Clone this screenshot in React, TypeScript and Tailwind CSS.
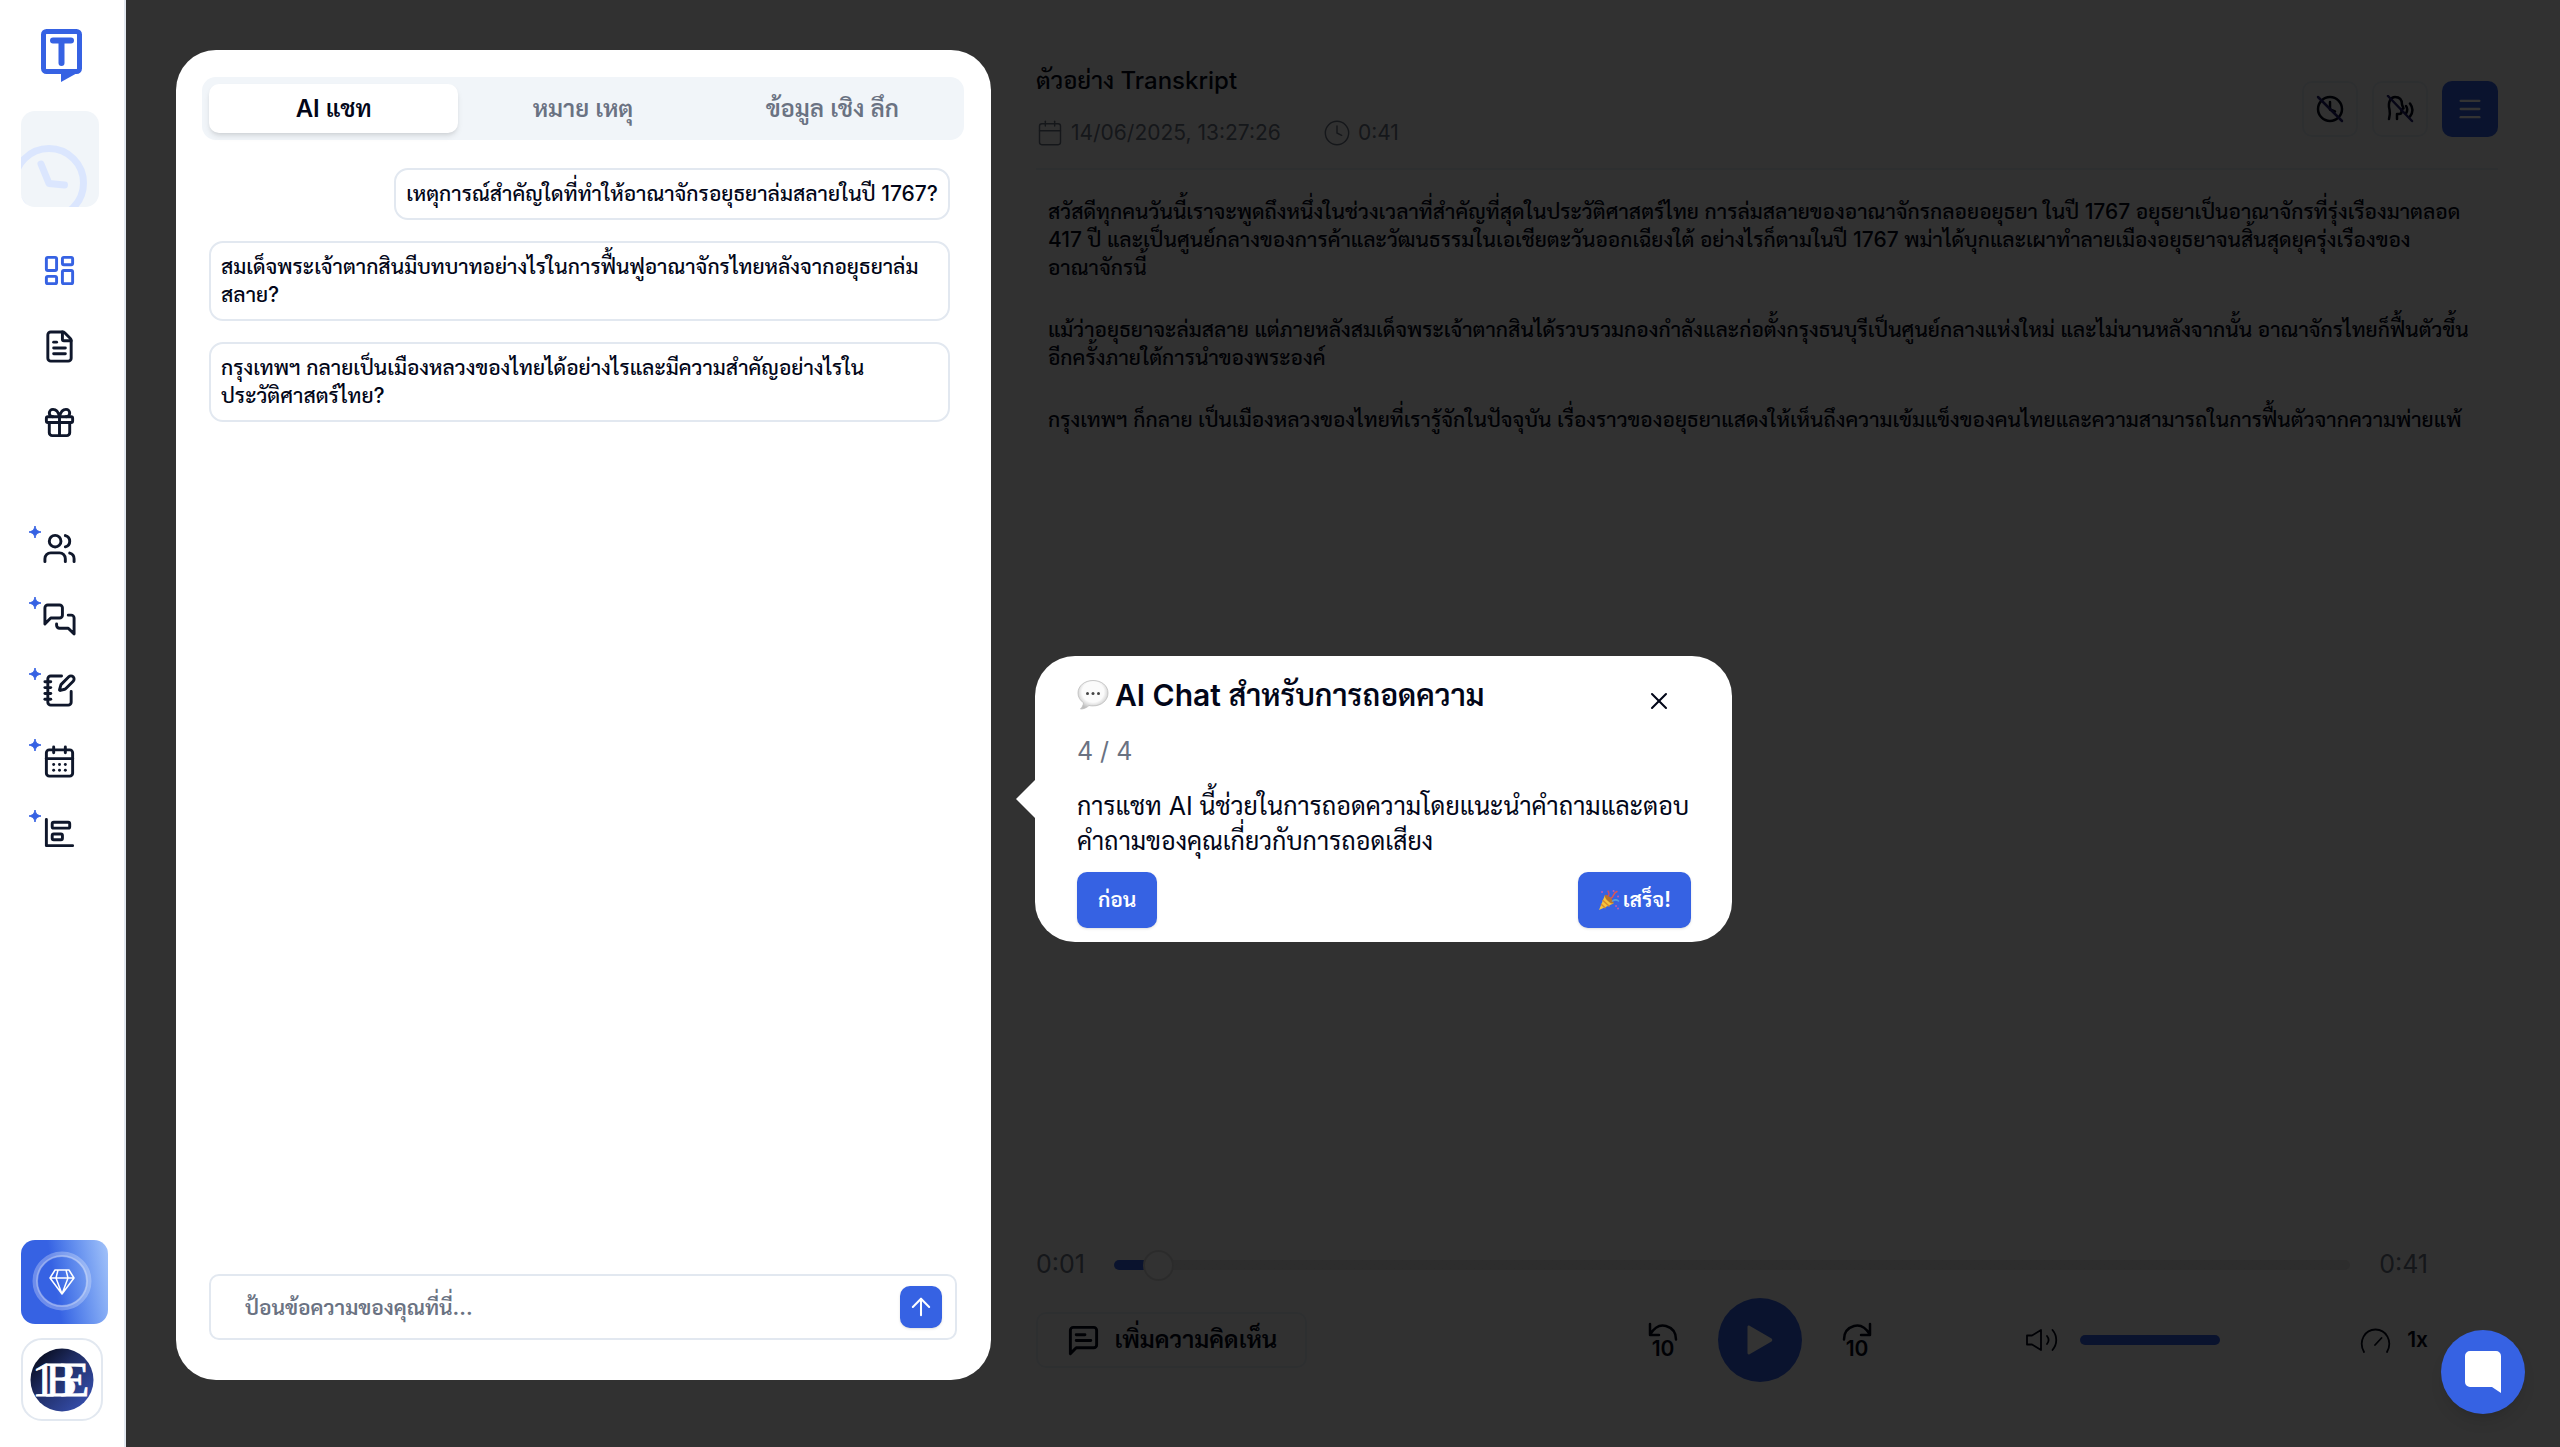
import type { ReactNode } from "react";
import { ArrowUp, Calendar, CalendarDays, Clock, FileText, Gift, LayoutDashboard, Menu, NotebookPen, X } from "lucide-react";

const BLUE = "#3662e3";

function Stroke({ size = 35, width = 2, children }: { size?: number; width?: number; children: ReactNode }) {
  return (
    <svg width={size} height={size} viewBox="0 0 24 24" fill="none" stroke="currentColor" strokeWidth={width} strokeLinecap="round" strokeLinejoin="round" aria-hidden="true">
      {children}
    </svg>
  );
}

function Logo() {
  return (
    <svg width="41" height="53" viewBox="0 0 41 53" aria-hidden="true">
      <rect x="2.5" y="2.5" width="36" height="40" rx="3" fill="none" stroke={BLUE} strokeWidth="5" />
      <path d="M20 43h18l-18 10z" fill={BLUE} />
      <path d="M12 11.5h18M20.5 12v22" stroke={BLUE} strokeWidth="6" strokeLinecap="round" fill="none" />
    </svg>
  );
}

function Sparkle() {
  return (
    <svg className="absolute -top-[5px] left-[29px]" width="12" height="12" viewBox="0 0 12 12" aria-hidden="true">
      <path d="M6 0c.7 3.5 1.8 4.900 6 6-4.200 1.100-5.300 2.500-6 6-.7-3.500-1.800-4.900-6-6 4.200-1.100 5.300-2.500 6-6z" fill={BLUE} stroke={BLUE} strokeWidth="1" strokeLinejoin="round" />
    </svg>
  );
}

function Sidebar() {
  const tools: [string, ReactNode][] = [
    ["ทีม", <Stroke><path d="M16 21v-2a4 4 0 0 0-4-4H6a4 4 0 0 0-4 4v2" /><circle cx="9" cy="7" r="4" /><path d="M22 21v-2a4 4 0 0 0-3-3.870M16 3.130a4 4 0 0 1 0 7.750" /></Stroke>],
    ["แชท", <Stroke><path d="M14 9a2 2 0 0 1-2 2H6l-4 4V4a2 2 0 0 1 2-2h8a2 2 0 0 1 2 2zM18 9h2a2 2 0 0 1 2 2v11l-4-4h-6a2 2 0 0 1-2-2v-1" /></Stroke>],
    ["สมุดบันทึก", <NotebookPen size={35} />],
    ["ปฏิทิน", <CalendarDays size={35} />],
    ["รายงาน", <Stroke><path d="M3 3v18h18" /><rect x="7" y="5" width="12" height="4" rx="1" /><rect x="7" y="13" width="7" height="4" rx="1" /></Stroke>],
  ];
  return (
    <aside className="relative z-20 flex w-[126px] shrink-0 flex-col border-r-2 border-slate-200 bg-white text-slate-900">
      <a href="#home" aria-label="Transkript" className="ml-[41px] mt-[29px]"><Logo /></a>
      <button aria-label="ประวัติ" className="ml-[21px] mt-[29px] h-24 w-[78px] overflow-hidden rounded-[14px] bg-slate-100">
        <svg width="78" height="96" viewBox="0 0 78 96" fill="none" stroke="#dbe6fe" strokeLinecap="round" strokeLinejoin="round" aria-hidden="true">
          <circle cx="28" cy="72" r="34.500" strokeWidth="7" />
          <path d="M20 53l8 19.500 15.500 1.500" strokeWidth="7" />
        </svg>
      </button>
      <nav className="mt-[46px] flex flex-col gap-[41px]">
        <a href="#dashboard" aria-label="แดชบอร์ด" className="ml-[42px] w-[35px]" style={{ color: BLUE }}><LayoutDashboard size={35} /></a>
        <a href="#files" aria-label="ไฟล์" className="ml-[42px] w-[35px]"><FileText size={35} /></a>
        <a href="#gifts" aria-label="ของขวัญ" className="ml-[42px] w-[35px]"><Gift size={35} /></a>
      </nav>
      <nav className="mt-[91px] flex flex-col gap-9">
        {tools.map(([label, icon]) => (
          <a key={label} href="#tools" aria-label={label} className="relative pl-[42px]"><Sparkle />{icon}</a>
        ))}
      </nav>
      <div className="mb-[26px] ml-[21px] mt-auto flex flex-col gap-[14px]">
        <button aria-label="อัปเกรด" className="flex h-[84px] w-[87px] items-center justify-center rounded-[14px] bg-linear-80 from-[#3662e3] from-40% to-[#a3c3f9]">
          <svg className="mr-[5px] mt-[-3px]" width="60" height="60" viewBox="0 0 60 60" fill="none" stroke="#fff" aria-hidden="true">
            <circle cx="30" cy="30" r="27" strokeOpacity=".28" strokeWidth="5" />
            <circle cx="30" cy="30" r="25" strokeOpacity=".28" strokeWidth="2" />
            <path d="M23 19h14l5 8-12 16-12-16zM18 27h24M26 19l-2 8 6 16 6-16-2-8" strokeWidth="1.500" strokeLinejoin="round" />
          </svg>
        </button>
        <button aria-label="1BE" className="flex h-[83px] w-[82px] items-center justify-center rounded-[21px] border-2 border-slate-200 bg-white">
          <svg width="64" height="64" viewBox="0 0 64 64" aria-hidden="true">
            <defs>
              <linearGradient id="avatar" x1="0" y1="0" x2="1" y2="1">
                <stop offset="0.050" stopColor="#040714" /><stop offset="0.400" stopColor="#1e2b60" /><stop offset="1" stopColor="#3b56bd" />
              </linearGradient>
            </defs>
            <circle cx="32" cy="32" r="31.500" fill="url(#avatar)" />
            <text x="2 15 30" y="48" fill="#fff" stroke="#fff" strokeWidth=".8" fontFamily="Liberation Serif, serif" fontSize="48">1BE</text>
          </svg>
        </button>
      </div>
    </aside>
  );
}

const bubble = "rounded-[14px] border-2 border-slate-200 px-[10px] py-[10px] text-left text-[21px] font-medium leading-[28px] text-slate-950";

function ChatPanel() {
  return (
    <section className="relative z-20 mb-0.5 flex flex-col rounded-[40px] bg-white pb-10 pl-[26px] pr-[27px] pt-[27px]">
      <div role="tablist" className="grid h-[63px] grid-cols-3 rounded-[14px] bg-slate-100 p-[7px] text-2xl font-semibold text-gray-500">
        <button role="tab" aria-selected="true" className="rounded-[10px] bg-white text-slate-950 shadow-md">AI แชท</button>
        <button role="tab" aria-selected="false">หมาย เหตุ</button>
        <button role="tab" aria-selected="false">ข้อมูล เชิง ลึก</button>
      </div>
      <div className="mt-7 flex flex-1 flex-col items-end gap-[21px] pl-[7px] pr-[14px]">
        <button className={bubble}>เหตุการณ์สำคัญใดที่ทำให้อาณาจักรอยุธยาล่มสลายในปี 1767?</button>
        <button className={`${bubble} w-full`}>สมเด็จพระเจ้าตากสินมีบทบาทอย่างไรในการฟื้นฟูอาณาจักรไทยหลังจากอยุธยาล่ม<br />สลาย?</button>
        <button className={`${bubble} w-full`}>กรุงเทพฯ กลายเป็นเมืองหลวงของไทยได้อย่างไรและมีความสำคัญอย่างไรใน<br />ประวัติศาสตร์ไทย?</button>
      </div>
      <form className="ml-[7px] mr-[7px] flex h-[66px] items-center rounded-[10px] border-2 border-slate-200 pl-[34px] pr-[13px]">
        <input aria-label="ข้อความ" placeholder="ป้อนข้อความของคุณที่นี่..." className="h-full min-w-0 flex-1 text-[21px] font-semibold leading-[42px] outline-none placeholder:overflow-visible placeholder:leading-[42px] placeholder:text-gray-500" />
        <button type="button" aria-label="ส่ง" className="flex size-[42px] items-center justify-center rounded-[10px] bg-[#3662e3] text-white shadow"><ArrowUp size={28} strokeWidth={1.75} /></button>
      </form>
      <Tour />
    </section>
  );
}

function SpeechBalloon() {
  return (
    <svg width="32" height="32" viewBox="0 0 32 32" aria-hidden="true">
      <defs><radialGradient id="balloon" cx=".5" cy=".4" r=".6"><stop offset="0.600" stopColor="#fbfbfb" /><stop offset="1" stopColor="#bdbdbd" /></radialGradient></defs>
      <path d="M16 1.500C7.500 1.500 1 7 1 14c0 4 2 7.500 5.500 9.700C6.500 26 5 28.500 3.500 30c3 .2 6.500-1.500 8.500-3.500 1.300.3 2.600.4 4 .4 8.500 0 15-5.600 15-12.900S24.500 1.500 16 1.500z" fill="url(#balloon)" stroke="#bdbdbd" strokeWidth=".8" />
      <circle cx="10.500" cy="14.500" r="1.500" fill="#444" /><circle cx="16" cy="14.500" r="1.500" fill="#444" /><circle cx="21.500" cy="14.500" r="1.500" fill="#444" />
    </svg>
  );
}

function PartyPopper() {
  return (
    <svg width="22" height="22" viewBox="0 0 22 22" fill="none" strokeLinecap="round" aria-hidden="true">
      <path d="M1 21L7 6c3 1 7.500 5 8.500 8.500z" fill="#f5c33b" />
      <path d="M5 11.500l6 5.500M3.500 15.500l3.500 3.200" stroke="#d98a2b" strokeWidth="1.500" />
      <ellipse cx="11.200" cy="10.200" rx="2.200" ry="5.800" transform="rotate(-45 11.200 10.200)" fill="#b9742a" />
      <path d="M10 7c1.500-1 1-3.500 0-5" stroke="#c9506a" strokeWidth="1.500" />
      <path d="M13 9c3 0 1.500-5 6-6.500" stroke="#e0564f" strokeWidth="1.500" />
      <path d="M14.500 12c2-1.500 4-1.500 6 0" stroke="#57a0dc" strokeWidth="1.500" />
      <path d="M4 3h.1M15.500 2h.1M20 7.500h.1M18 17h.1M20 19.500h.1" stroke="#c35bb0" strokeWidth="1.800" />
    </svg>
  );
}

function Tour() {
  return (
    <div role="dialog" aria-label="AI Chat" className="absolute left-full top-[606px] ml-11 w-[697px] rounded-[40px] bg-white pb-[14px] pl-[42px] pr-[41px] pt-[17px] text-slate-950">
      <svg className="absolute -left-[19px] top-[123px]" width="20" height="40" viewBox="0 0 20 40" aria-hidden="true"><path d="M20 0L0 20l20 20z" fill="#fff" /></svg>
      <div className="flex items-start justify-between">
        <div>
          <h2 className="flex items-center gap-[6px] whitespace-nowrap text-[30px] font-semibold leading-[44px]"><SpeechBalloon />AI Chat สำหรับการถอดความ</h2>
          <p className="mt-[17px] text-[25px] leading-[35px] text-gray-500">4 / 4</p>
        </div>
        <button aria-label="ปิด" className="mr-1 flex size-14 items-center justify-center"><X size={28} strokeWidth={1.75} /></button>
      </div>
      <p className="mt-5 whitespace-nowrap text-[25px] leading-[35px]">การแชท AI นี้ช่วยในการถอดความโดยแนะนำคำถามและตอบ<br />คำถามของคุณเกี่ยวกับการถอดเสียง</p>
      <div className="mt-[13px] flex justify-between text-[21px] font-semibold text-white">
        <button className="h-14 rounded-[10px] bg-[#3662e3] px-[21px] shadow">ก่อน</button>
        <button className="flex h-14 items-center gap-[3px] rounded-[10px] bg-[#3662e3] px-5 shadow"><PartyPopper />เสร็จ!</button>
      </div>
    </div>
  );
}

const iconButton = "flex size-14 items-center justify-center rounded-[10px]";

function Header() {
  return (
    <header className="flex items-start justify-between border-b-2 border-slate-200 pb-[14px] pt-[10px]">
      <div>
        <h1 className="text-2xl font-medium leading-[42px]">ตัวอย่าง Transkript</h1>
        <div className="mt-[10px] flex items-center gap-[42px] text-[21px] leading-[42px] text-gray-500">
          <span className="flex items-center gap-[7px]"><Calendar size={28} strokeWidth={1.25} />14/06/2025, 13:27:26</span>
          <span className="flex items-center gap-[7px]"><Clock size={28} strokeWidth={1.25} />0:41</span>
        </div>
      </div>
      <div className="mt-[21px] flex gap-[14px]">
        <button aria-label="ซ่อนเวลา" className={`${iconButton} border-2 border-slate-200 text-slate-950`}>
          <svg width="28" height="28" viewBox="0 0 28 28" fill="none" stroke="currentColor" strokeWidth="2.500" strokeLinecap="round" strokeLinejoin="round" aria-hidden="true">
            <circle cx="14" cy="14" r="12" /><path d="M14 7v7.500l5 2" /><path d="M2 2l24 24" stroke="#1e1b6b" />
          </svg>
        </button>
        <button aria-label="ซ่อนผู้พูด" className={`${iconButton} border-2 border-slate-200 text-slate-950`}>
          <svg width="28" height="28" viewBox="0 0 28 28" fill="none" stroke="currentColor" strokeWidth="2.500" strokeLinecap="round" strokeLinejoin="round" aria-hidden="true">
            <path d="M3 24c1.500-5 1-7 .5-9.500C1.500 7 5 2 9 2c5 0 7 3.500 7 7.500l1.500 4-2 1v2.500c0 1.500-1 2-2.500 2h-2v5" /><path d="M20 11c1.500 2 1.500 5 0 7.500M24 8.500c3 4 3 9 0 13" /><path d="M2 1l24 25" stroke="#1e1b6b" />
          </svg>
        </button>
        <button aria-label="เมนู" className={`${iconButton} bg-[#3662e3] text-white`}><Menu size={28} strokeWidth={2} /></button>
      </div>
    </header>
  );
}

function Transcript() {
  return (
    <article className="flex flex-1 flex-col gap-[34px] whitespace-nowrap px-3 pt-7 text-[21px] font-medium leading-[28px]">
      <p>สวัสดีทุกคนวันนี้เราจะพูดถึงหนึ่งในช่วงเวลาที่สำคัญที่สุดในประวัติศาสตร์ไทย การล่มสลายของอาณาจักรกลอยอยุธยา ในปี 1767 อยุธยาเป็นอาณาจักรที่รุ่งเรืองมาตลอด<br />417 ปี และเป็นศูนย์กลางของการค้าและวัฒนธรรมในเอเชียตะวันออกเฉียงใต้ อย่างไรก็ตามในปี 1767 พม่าได้บุกและเผาทำลายเมืองอยุธยาจนสิ้นสุดยุครุ่งเรืองของ<br />อาณาจักรนี้</p>
      <p>แม้ว่าอยุธยาจะล่มสลาย แต่ภายหลังสมเด็จพระเจ้าตากสินได้รวบรวมกองกำลังและก่อตั้งกรุงธนบุรีเป็นศูนย์กลางแห่งใหม่ และไม่นานหลังจากนั้น อาณาจักรไทยก็ฟื้นตัวขึ้น<br />อีกครั้งภายใต้การนำของพระองค์</p>
      <p>กรุงเทพฯ ก็กลาย เป็นเมืองหลวงของไทยที่เรารู้จักในปัจจุบัน เรื่องราวของอยุธยาแสดงให้เห็นถึงความเข้มแข็งของคนไทยและความสามารถในการฟื้นตัวจากความพ่ายแพ้</p>
    </article>
  );
}

function Skip({ forward }: { forward?: boolean }) {
  return (
    <svg width="30" height="46" viewBox="0 -4 30 46" fill="none" stroke="currentColor" strokeWidth="2.500" strokeLinecap="round" strokeLinejoin="round" aria-hidden="true">
      {forward ? <path d="M28 3v11h-9M28 13.500C23 5.500 17 3.500 12 5 5 7 2 12 2 18.500" /> : <path d="M2 3v11h9M2 13.500C7 5.500 13 3.500 18 5c7 2 10 7 10 13.500" />}
      <text x="15" y="35" textAnchor="middle" fontSize="21" fontWeight="600" fill="currentColor" stroke="none">10</text>
    </svg>
  );
}

function Player() {
  return (
    <footer className="mr-[70px]">
      <div className="flex h-8 items-center gap-[29px] text-[25px] text-gray-500">
        <span>0:01</span>
        <input
          type="range" aria-label="ตำแหน่ง" min={0} max={41} defaultValue={1}
          className="h-[10px] min-w-0 flex-1 appearance-none rounded-full bg-linear-to-r from-[#3662e3] from-[44px] to-[#dedede] to-[44px] [&::-webkit-slider-thumb]:size-[31px] [&::-webkit-slider-thumb]:appearance-none [&::-webkit-slider-thumb]:rounded-full [&::-webkit-slider-thumb]:border-2 [&::-webkit-slider-thumb]:border-[#d8d8d8] [&::-webkit-slider-thumb]:bg-[#f8f8f8]"
        />
        <span>0:41</span>
      </div>
      <div className="mt-[17px] flex h-[84px] items-center">
        <button className="flex h-14 w-[271px] items-center justify-center gap-[14px] whitespace-nowrap rounded-[10px] border-2 border-slate-200 text-2xl font-semibold">
          <Stroke><path d="M21 15a2 2 0 0 1-2 2H7l-4 4V5a2 2 0 0 1 2-2h14a2 2 0 0 1 2 2zM13 8H7M17 12H7" /></Stroke>
          เพิ่มความคิดเห็น
        </button>
        <div className="flex-[20]" />
        <div className="flex items-center gap-10">
          <button aria-label="ย้อนกลับ 10 วินาที"><Skip /></button>
          <button aria-label="เล่น" className="flex size-[84px] items-center justify-center rounded-full bg-[#3662e3]">
            <svg width="26" height="30" viewBox="0 0 26 30" fill="#fff" aria-hidden="true"><path d="M2.500.8l22 12.700c1 .7 1 2.300 0 3l-22 12.700C1.500 29.800.5 29 .5 28V2C.5 1 1.500.2 2.500.8z" /></svg>
          </button>
          <button aria-label="ไปข้างหน้า 10 วินาที"><Skip forward /></button>
        </div>
        <div className="flex-[9]" />
        <button aria-label="ปิดเสียง">
          <svg width="32" height="24" viewBox="0 0 32 24" fill="none" stroke="currentColor" strokeWidth="1.800" strokeLinecap="round" strokeLinejoin="round" aria-hidden="true">
            <path d="M1 7.500h5L15 2v20l-9-5.500H1zM21 8c2 2.500 2 5.500 0 8M26.500 2c5 6 5 14 0 20" />
          </svg>
        </button>
        <input type="range" aria-label="ระดับเสียง" defaultValue={100} className="ml-[22px] h-[10px] w-[140px] appearance-none rounded-full bg-[#3662e3] [&::-webkit-slider-thumb]:size-0 [&::-webkit-slider-thumb]:appearance-none" />
        <button aria-label="ความเร็ว" className="ml-[140px] flex items-center gap-4 text-[21px] font-semibold">
          <svg width="31" height="25" viewBox="0 0 31 25" fill="none" stroke="currentColor" strokeWidth="1.800" strokeLinecap="round" aria-hidden="true">
            <path d="M4 24C-2 13 5 1.500 15.500 1.500S33 13 27 24M15 17l6.500-7" />
          </svg>
          1x
        </button>
      </div>
    </footer>
  );
}

export default function App() {
  return (
    <div className="flex h-screen bg-[#f6f6f6] font-['Inter','Sarabun','Noto_Sans',sans-serif] text-slate-950">
      <Sidebar />
      <main className="relative grid min-w-0 flex-1 grid-cols-[34fr_61fr] gap-[45px] pb-[65px] pl-[50px] pr-[62px] pt-[50px]">
        <div className="absolute inset-0 z-10 bg-black/80" />
        <ChatPanel />
        <section className="flex min-w-0 flex-col">
          <Header />
          <Transcript />
          <Player />
        </section>
      </main>
      <button aria-label="แชทช่วยเหลือ" className="fixed bottom-[33px] right-[35px] z-30 flex size-[84px] items-center justify-center rounded-full bg-[#3662e3] shadow-lg">
        <svg width="36" height="42" viewBox="0 0 36 42" fill="#fff" aria-hidden="true"><path d="M5 0h26a5 5 0 0 1 5 5v37l-9-6H5a5 5 0 0 1-5-5V5a5 5 0 0 1 5-5z" /></svg>
      </button>
    </div>
  );
}
